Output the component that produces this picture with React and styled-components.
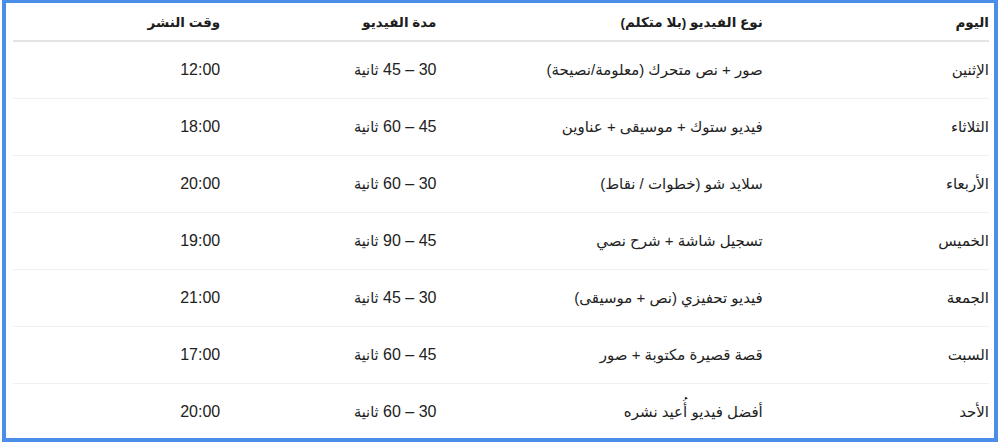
import React from 'react';
import styled, { createGlobalStyle } from 'styled-components';

const BLUE = '#4a8eea';
const TEXT = '#222';

const GlobalStyle = createGlobalStyle`
  html, body {
    margin: 0;
    padding: 0;
    background: #fff;
  }
  body {
    font-family: "Liberation Sans", "DejaVu Sans", "Noto Sans", sans-serif;
    color: ${TEXT};
  }
`;

const Frame = styled.div`
  box-sizing: border-box;
  width: 996px;
  height: 442px;
  margin-left: 2px;
  border: 4px solid ${BLUE};
  border-top-width: 3px;
  padding: 0 5px 0 7px;
  background: #fff;
`;

const Table = styled.table`
  width: 100%;
  border-collapse: collapse;
  direction: rtl;
  table-layout: fixed;
`;

const HeadCell = styled.th`
  width: ${p => p.$w}px;
  height: 37px;
  padding: 0;
  text-align: right;
  vertical-align: middle;
  font-size: 13.5px;
  font-weight: bold;
  color: #1d1d1d;
  border-bottom: 2px solid #e4e4e4;
`;

const Row = styled.tr`
  &:not(:last-child) td {
    border-bottom: 1px solid #f0f0f0;
  }
`;

const Cell = styled.td`
  height: 56px;
  padding: 0;
  text-align: right;
  vertical-align: middle;
  font-size: ${p => (p.$num ? 16 : 15)}px;
  color: ${TEXT};
  white-space: nowrap;
`;

const columns = [
  { title: 'اليوم', width: 226 },
  { title: 'نوع الفيديو (بلا متكلم)', width: 326 },
  { title: 'مدة الفيديو', width: 216 },
  { title: 'وقت النشر', width: 207 },
];

const rows = [
  ['الإثنين', 'صور + نص متحرك (معلومة/نصيحة)', '30 – 45', '12:00'],
  ['الثلاثاء', 'فيديو ستوك + موسيقى + عناوين', '45 – 60', '18:00'],
  ['الأربعاء', 'سلايد شو (خطوات / نقاط)', '30 – 60', '20:00'],
  ['الخميس', 'تسجيل شاشة + شرح نصي', '45 – 90', '19:00'],
  ['الجمعة', 'فيديو تحفيزي (نص + موسيقى)', '30 – 45', '21:00'],
  ['السبت', 'قصة قصيرة مكتوبة + صور', '45 – 60', '17:00'],
  ['الأحد', 'أفضل فيديو أُعيد نشره', '30 – 60', '20:00'],
];

const Seconds = styled.span`
  font-size: 14.5px;
`;

export default function App() {
  return (
    <>
      <GlobalStyle />
      <Frame>
        <Table>
          <thead>
            <tr>
              {columns.map(c => (
                <HeadCell key={c.title} $w={c.width}>
                  {c.title}
                </HeadCell>
              ))}
            </tr>
          </thead>
          <tbody>
            {rows.map(([day, type, dur, time]) => (
              <Row key={day}>
                <Cell>{day}</Cell>
                <Cell>{type}</Cell>
                <Cell $num>
                  {dur} <Seconds>ثانية</Seconds>
                </Cell>
                <Cell $num>{time}</Cell>
              </Row>
            ))}
          </tbody>
        </Table>
      </Frame>
    </>
  );
}
